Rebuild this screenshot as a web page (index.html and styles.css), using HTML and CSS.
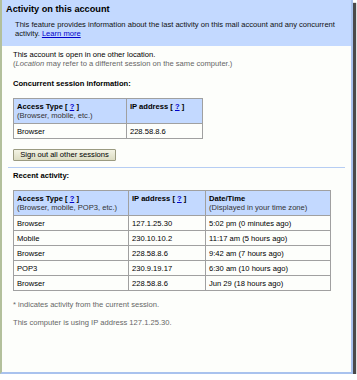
FILE: index.html
```html
<!DOCTYPE html>
<html>
<head>
<meta charset="utf-8">
<link rel="stylesheet" href="styles.css">
</head>
<body>
<div class="window">
  <div class="header">
    <div class="title">Activity on this account</div>
    <div class="desc">This feature provides information about the last activity on this mail account and any concurrent activity. <a href="#" class="link">Learn more</a></div>
  </div>
  <div class="content">
    <p class="para">This account is open in one other location.<br><span class="muted">(<i>Location</i> may refer to a different session on the same computer.)</span></p>
    <div class="heading">Concurrent session information:</div>
    <table class="grid small">
      <tr class="head">
        <td class="c1"><b>Access Type [ <a href="#" class="link">?</a> ]</b><br><span class="sub">(Browser, mobile, etc.)</span></td>
        <td class="c2"><b>IP address [ <a href="#" class="link">?</a> ]</b><br>&nbsp;</td>
      </tr>
      <tr><td>Browser</td><td>228.58.8.6</td></tr>
    </table>
    <button class="btn">Sign out all other sessions</button>
  </div>
  <div class="sep"></div>
  <div class="content">
    <div class="heading h2">Recent activity:</div>
    <table class="grid big">
      <tr class="head">
        <td class="c1"><b>Access Type [ <a href="#" class="link">?</a> ]</b><br><span class="sub">(Browser, mobile, POP3, etc.)</span></td>
        <td class="c2"><b>IP address [ <a href="#" class="link">?</a> ]</b><br>&nbsp;</td>
        <td class="c3"><b>Date/Time</b><br><span class="sub">(Displayed in your time zone)</span></td>
      </tr>
      <tr><td>Browser</td><td>127.1.25.30</td><td>5:02 pm (0 minutes ago)</td></tr>
      <tr><td>Mobile</td><td>230.10.10.2</td><td>11:17 am (5 hours ago)</td></tr>
      <tr><td>Browser</td><td>228.58.8.6</td><td>9:42 am (7 hours ago)</td></tr>
      <tr><td>POP3</td><td>230.9.19.17</td><td>6:30 am (10 hours ago)</td></tr>
      <tr><td>Browser</td><td>228.58.8.6</td><td>Jun 29 (18 hours ago)</td></tr>
    </table>
    <p class="note">* indicates activity from the current session.</p>
    <p class="note">This computer is using IP address 127.1.25.30.</p>
  </div>
</div>
</body>
</html>
```
FILE: styles.css
```css
html, body {
  margin: 0;
  padding: 0;
  background: #ffffff;
}
body {
  font-family: "Liberation Sans", Arial, sans-serif;
  font-size: 7.6px;
  line-height: 9.5px;
  color: #000;
}
.window {
  width: 349px;
  height: 372px;
  border-left: 2px solid #b3c09c;
  border-right: 2px solid #a9c2ee;
  border-bottom: 2px solid #a9c2ee;
  background: #fdfefb;
  box-shadow: 3px 3px 1px 0 #4a4a4a;
  overflow: hidden;
}
.header {
  background: #c3d9ff;
  height: 46px;
  box-sizing: border-box;
  padding: 4px 4px 0 4px;
}
.title {
  font-size: 9.2px;
  line-height: 11px;
  font-weight: bold;
}
.desc {
  margin-top: 4.8px;
  padding-left: 9px;
  line-height: 9.6px;
  color: #111;
}
.link {
  color: #0000cc;
  text-decoration: underline;
}
.content {
  padding: 0 11px;
}
.para {
  margin: 3.6px 0 0;
}
.muted {
  color: #666;
}
.heading {
  font-weight: bold;
  margin-top: 10.7px;
}
.heading.h2 {
  margin-top: 3.3px;
}
.grid {
  border-collapse: collapse;
  margin-top: 9.5px;
  line-height: 9px;
  border: 1.5px solid #919191;
}
.grid td {
  border: 1px solid #a0a0a0;
  padding: 3px 3px 2px;
  vertical-align: top;
  text-align: left;
}
.grid .head td {
  background: #c3d9ff;
  padding: 2.5px 3px 3px;
}
.sub {
  color: #333;
}
.small { width: 190px; }
.big { width: 318px; }
.c1 { width: 108px; }
.c2 { width: 70px; }
.btn {
  display: block;
  margin-top: 10px;
  width: 103px;
  height: 12.5px;
  padding: 0;
  font-family: "Liberation Sans", Arial, sans-serif;
  font-size: 7.6px;
  line-height: 10px;
  color: #000;
  background: linear-gradient(#f3f3e4, #dcdcc2);
  border: 1px solid #9a9a80;
  border-radius: 1px;
}
.sep {
  margin: 5.5px 6px 0;
  height: 1px;
  background: #b6cdf3;
}
.note {
  margin: 9px 0 0;
  color: #666;
}
```
